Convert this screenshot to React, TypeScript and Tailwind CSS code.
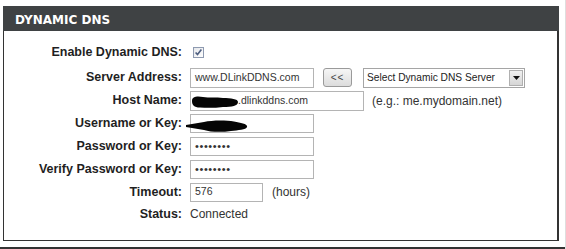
import React from "react";

const label = "w-[179px] shrink-0 pr-[1px] text-right text-[12.5px] font-bold text-[#1f1f1f] [font-family:'Liberation_Sans',Arial,sans-serif]";
const input =
  "flex h-[19px] items-center border border-[#b4b4b4] bg-white pl-[4px] text-[10.5px] text-[#333] [font-family:'Liberation_Sans',Arial,sans-serif]";
const plain = "text-[12px] text-[#333] [font-family:'Liberation_Sans',Arial,sans-serif]";

function Checkbox() {
  return (
    <svg width="11" height="11" viewBox="0 0 11 11" className="ml-[3px]">
      <defs>
        <linearGradient id="cb" x1="0" y1="0" x2="1" y2="1">
          <stop offset="0" stopColor="#e4e6ea" />
          <stop offset="1" stopColor="#ffffff" />
        </linearGradient>
      </defs>
      <rect x="0.5" y="0.5" width="10" height="10" fill="url(#cb)" stroke="#8e9ab0" />
      <path d="M2.6 5.4 L4.5 7.6 L8.4 2.6" fill="none" stroke="#4e5f80" strokeWidth="1.6" />
    </svg>
  );
}

function Blob({ d, w, h }: { d: string; w: number; h: number }) {
  return (
    <svg width={w} height={h} viewBox={`0 0 ${w} ${h}`} className="block">
      <path d={d} fill="#050505" />
    </svg>
  );
}

function Row({ title, h = "h-[23px]", children }: { title: string; h?: string; children?: React.ReactNode }) {
  return (
    <div className={`relative flex items-center ${h}`}>
      <div className={label}>{title}</div>
      <div className="ml-[7px] flex items-center">{children}</div>
    </div>
  );
}

export default function App() {
  return (
    <div className="h-[249px] w-[566px] overflow-hidden border-r border-[#dedede] bg-white">
      <div className="w-[559px] pl-[3px] pt-[6px]">
        <div className="flex h-[25px] items-center bg-[#3f4244] pl-[12px] pt-[3px] text-[12px] font-bold text-white [font-family:'DejaVu_Sans',Verdana,sans-serif]">
          DYNAMIC DNS
        </div>
        <div className="border-b border-l border-r-2 border-[#333] pb-[15px] pt-[9px]">
          <Row title="Enable Dynamic DNS:" h="h-[24px] mb-[2px]">
            <Checkbox />
          </Row>
          <Row title="Server Address:">
            <div className={`${input} h-[20px] w-[124px]`}>www.DLinkDDNS.com</div>
            <div className="ml-[9px] flex h-[19px] w-[29px] items-center justify-center rounded-[3px] border border-[#9a9a9a] bg-gradient-to-b from-[#f6f6f6] to-[#dcdcdc] text-[10px] tracking-[1px] text-[#444] [font-family:'Liberation_Sans',Arial,sans-serif]">
              &lt;&lt;
            </div>
            <div className="ml-[11px] flex h-[20px] w-[162px] items-center justify-between border border-[#a5a5a5] bg-white pl-[3px] pr-[1px] text-[10.2px] text-[#222] [font-family:'Liberation_Sans',Arial,sans-serif]">
              <span>Select Dynamic DNS Server</span>
              <span className="flex h-[16px] w-[14px] items-center justify-center border border-[#b0b0b0] bg-gradient-to-b from-[#f0f0f0] to-[#d6d6d6]">
                <svg width="7" height="4" viewBox="0 0 7 4">
                  <path d="M0 0 H7 L3.5 4 Z" fill="#111" />
                </svg>
              </span>
            </div>
          </Row>
          <Row title="Host Name:">
            <div className={`${input} relative h-[20px] w-[174px]`}>
              <span className="inline-block w-[43px]" />
              <span>.dlinkddns.com</span>
              <span className="absolute left-[1px] top-[4px]">
                <Blob
                  w={47}
                  h={12}
                  d="M0 5 C0 0 6 0 11 1 C17 2 24 1 31 2 C39 2 46 3 46 6 C46 10 40 11 31 11 C23 12 15 12 8 11.5 C2 11.5 0 9 0 5 Z"
                />
              </span>
            </div>
            <span className={`ml-[8px] ${plain} text-[12.8px]`}>(e.g.: me.mydomain.net)</span>
          </Row>
          <Row title="Username or Key:">
            <div className={`${input} w-[124px]`} />
            <span className="absolute left-[182px] top-[8px]">
              <Blob
                w={62}
                h={12}
                d="M0 5 C6 4 12 3 18 2 C26 0 40 0 48 1.5 C55 3 62 4 61 7 C60 10 52 10 45 11 C35 12.5 24 12 18 10 C12 9 6 8 0 7 Z"
              />
            </span>
          </Row>
          <Row title="Password or Key:">
            <div className={`${input} w-[124px] text-[11px] tracking-[0.6px] text-[#111]`}>••••••••</div>
          </Row>
          <Row title="Verify Password or Key:">
            <div className={`${input} w-[124px] text-[11px] tracking-[0.6px] text-[#111]`}>••••••••</div>
          </Row>
          <Row title="Timeout:" h="h-[22px]">
            <div className={`${input} h-[17px] w-[73px]`}>576</div>
            <span className={`ml-[9px] ${plain}`}>(hours)</span>
          </Row>
          <Row title="Status:" h="h-[22px]">
            <span className={plain}>Connected</span>
          </Row>
        </div>
      </div>
      <div className="mt-[6px] h-[3px] w-full bg-[#333]" />
    </div>
  );
}
